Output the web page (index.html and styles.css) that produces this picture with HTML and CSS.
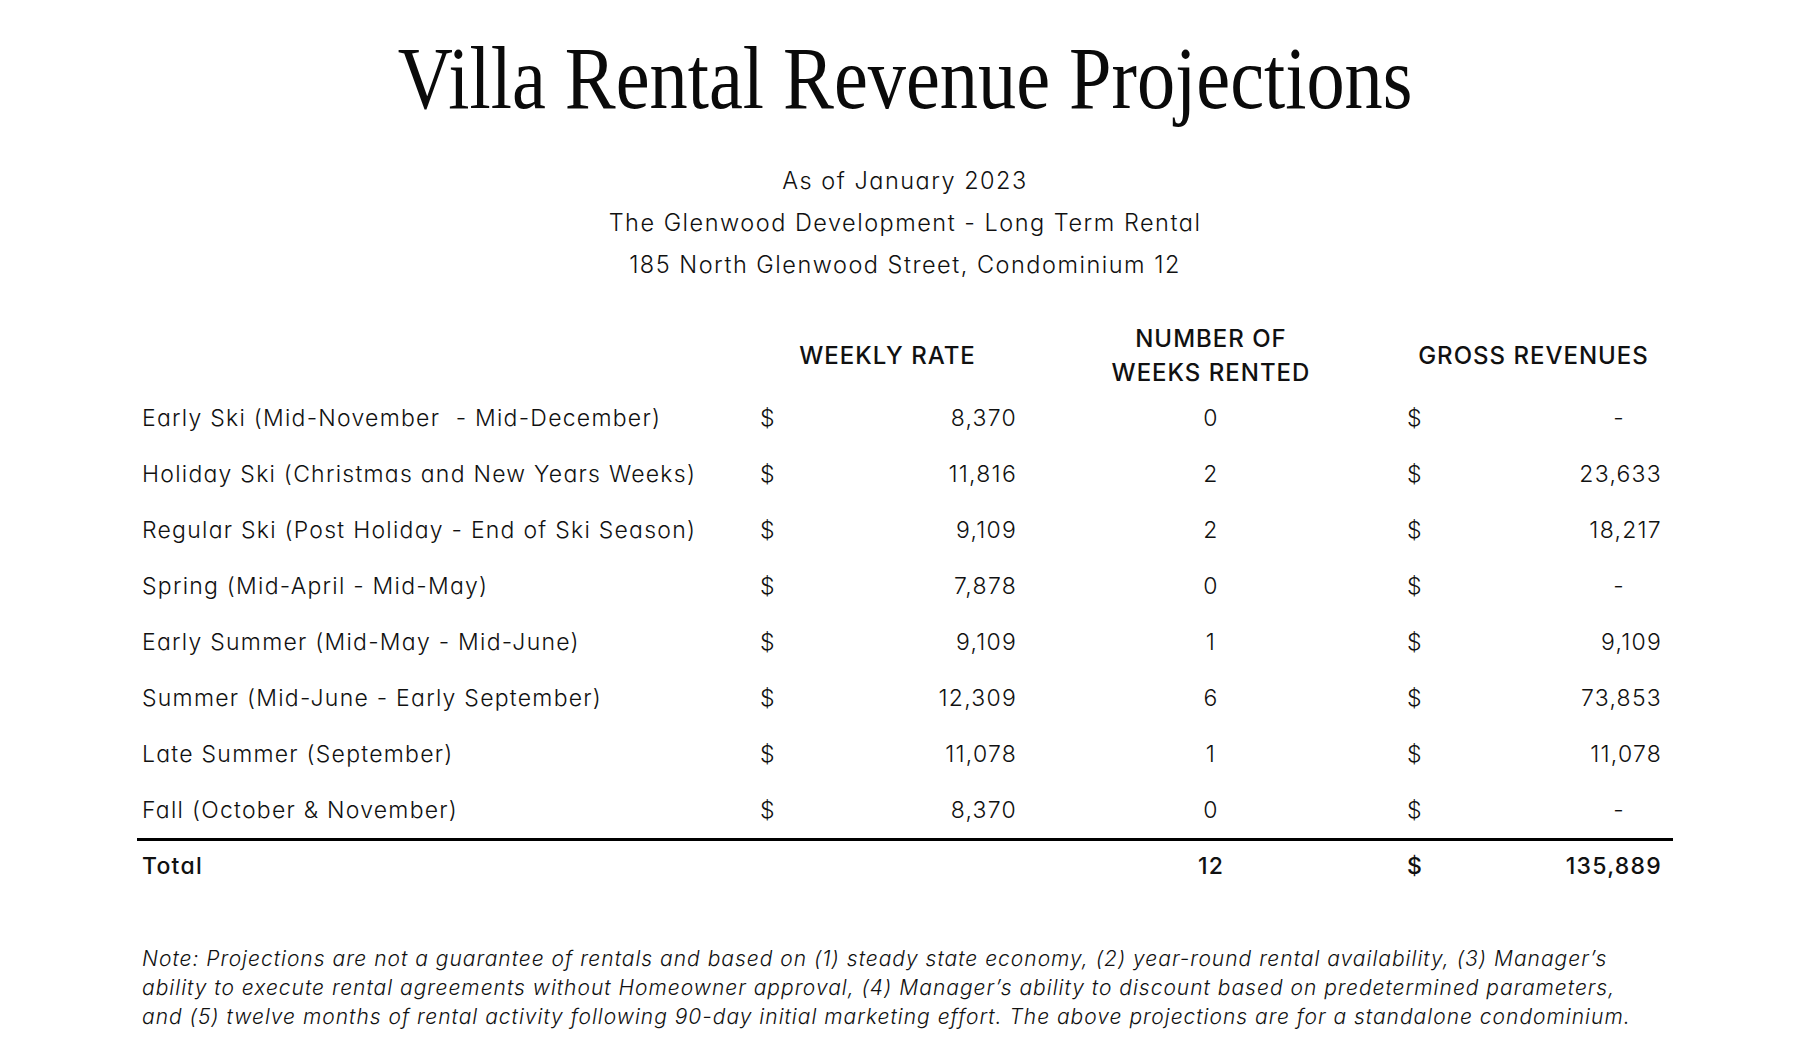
FILE: index.html
```html
<!DOCTYPE html>
<html lang="en">
<head>
<meta charset="utf-8">
<title>Villa Rental Revenue Projections</title>
<link rel="stylesheet" href="styles.css">
</head>
<body>
<main class="page">
  <h1 class="title"><span class="title-text">Villa Rental Revenue Projections</span></h1>
  <div class="subtitle">
    <p>As of January 2023</p>
    <p>The Glenwood Development - Long Term Rental</p>
    <p>185 North Glenwood Street, Condominium 12</p>
  </div>

  <div class="table">
    <div class="row head">
      <div class="cell label"></div>
      <div class="cell center">WEEKLY RATE</div>
      <div class="cell center">NUMBER OF<br>WEEKS RENTED</div>
      <div class="cell center">GROSS REVENUES</div>
    </div>

    <div class="row">
      <div class="cell label">Early Ski (Mid-November&nbsp; - Mid-December)</div>
      <div class="cell money"><span>$</span><span class="num">8,370</span></div>
      <div class="cell center">0</div>
      <div class="cell money"><span>$</span><span class="num dash">-</span></div>
    </div>
    <div class="row">
      <div class="cell label">Holiday Ski (Christmas and New Years Weeks)</div>
      <div class="cell money"><span>$</span><span class="num">11,816</span></div>
      <div class="cell center">2</div>
      <div class="cell money"><span>$</span><span class="num">23,633</span></div>
    </div>
    <div class="row">
      <div class="cell label">Regular Ski (Post Holiday - End of Ski Season)</div>
      <div class="cell money"><span>$</span><span class="num">9,109</span></div>
      <div class="cell center">2</div>
      <div class="cell money"><span>$</span><span class="num">18,217</span></div>
    </div>
    <div class="row">
      <div class="cell label">Spring (Mid-April - Mid-May)</div>
      <div class="cell money"><span>$</span><span class="num">7,878</span></div>
      <div class="cell center">0</div>
      <div class="cell money"><span>$</span><span class="num dash">-</span></div>
    </div>
    <div class="row">
      <div class="cell label">Early Summer (Mid-May - Mid-June)</div>
      <div class="cell money"><span>$</span><span class="num">9,109</span></div>
      <div class="cell center">1</div>
      <div class="cell money"><span>$</span><span class="num">9,109</span></div>
    </div>
    <div class="row">
      <div class="cell label">Summer (Mid-June - Early September)</div>
      <div class="cell money"><span>$</span><span class="num">12,309</span></div>
      <div class="cell center">6</div>
      <div class="cell money"><span>$</span><span class="num">73,853</span></div>
    </div>
    <div class="row">
      <div class="cell label">Late Summer (September)</div>
      <div class="cell money"><span>$</span><span class="num">11,078</span></div>
      <div class="cell center">1</div>
      <div class="cell money"><span>$</span><span class="num">11,078</span></div>
    </div>
    <div class="row">
      <div class="cell label">Fall (October &amp; November)</div>
      <div class="cell money"><span>$</span><span class="num">8,370</span></div>
      <div class="cell center">0</div>
      <div class="cell money"><span>$</span><span class="num dash">-</span></div>
    </div>

    <div class="row total">
      <div class="cell label">Total</div>
      <div class="cell money"></div>
      <div class="cell center">12</div>
      <div class="cell money"><span>$</span><span class="num">135,889</span></div>
    </div>
  </div>

  <p class="note">Note: Projections are not a guarantee of rentals and based on (1) steady state economy, (2) year-round rental availability, (3) Manager’s<br>ability to execute rental agreements without Homeowner approval, (4) Manager’s ability to discount based on predetermined parameters,<br>and (5) twelve months of rental activity following 90-day initial marketing effort. The above projections are for a standalone condominium.</p>
</main>
</body>
</html>
```

FILE: styles.css
```css
html, body {
  margin: 0;
  padding: 0;
  background: #ffffff;
}

body {
  font-family: Inter, "Noto Sans", sans-serif;
  font-feature-settings: "cv11" 1;
  color: #111111;
}

.page {
  width: 1536px;
  margin-left: 137px;
  padding-top: 35px;
}

.title {
  margin: 0;
  text-align: center;
  font-family: "Liberation Serif", serif;
  font-weight: 400;
  font-size: 88px;
  line-height: 88px;
  color: #0a0a0a;
}

.title-text {
  display: inline-block;
  transform: scaleX(0.867);
  transform-origin: center;
  white-space: nowrap;
}

.subtitle {
  margin-top: 37px;
  text-align: center;
  font-size: 23.5px;
  font-weight: 300;
  letter-spacing: 1.5px;
  line-height: 42px;
}

.subtitle p {
  margin: 0;
}

.table {
  margin-top: 36px;
  padding-right: 13px;
}

.row {
  display: grid;
  grid-template-columns: 623px 255px 392px 253px;
  align-items: center;
  height: 56px;
  font-size: 23px;
  font-weight: 300;
  letter-spacing: 1.25px;
}

.row.head {
  height: 68px;
  line-height: 34px;
  font-weight: 500;
  font-size: 24px;
  letter-spacing: 1px;
}

.row.total {
  height: 50px;
  border-top: 3px solid #000;
  margin-right: -13px;
  padding-right: 13px;
  font-weight: 500;
}

.cell.label {
  padding-left: 5px;
  white-space: nowrap;
}

.cell.center {
  text-align: center;
}

.cell.money {
  display: flex;
  justify-content: space-between;
}

.num {
  margin-right: -2px;
}

.num.dash {
  margin-right: 0;
  padding-right: 35px;
}

.note {
  margin: 53px 0 0 5px;
  font-size: 21px;
  font-style: italic;
  font-weight: 300;
  letter-spacing: 1px;
  line-height: 29px;
  white-space: nowrap;
}
```
